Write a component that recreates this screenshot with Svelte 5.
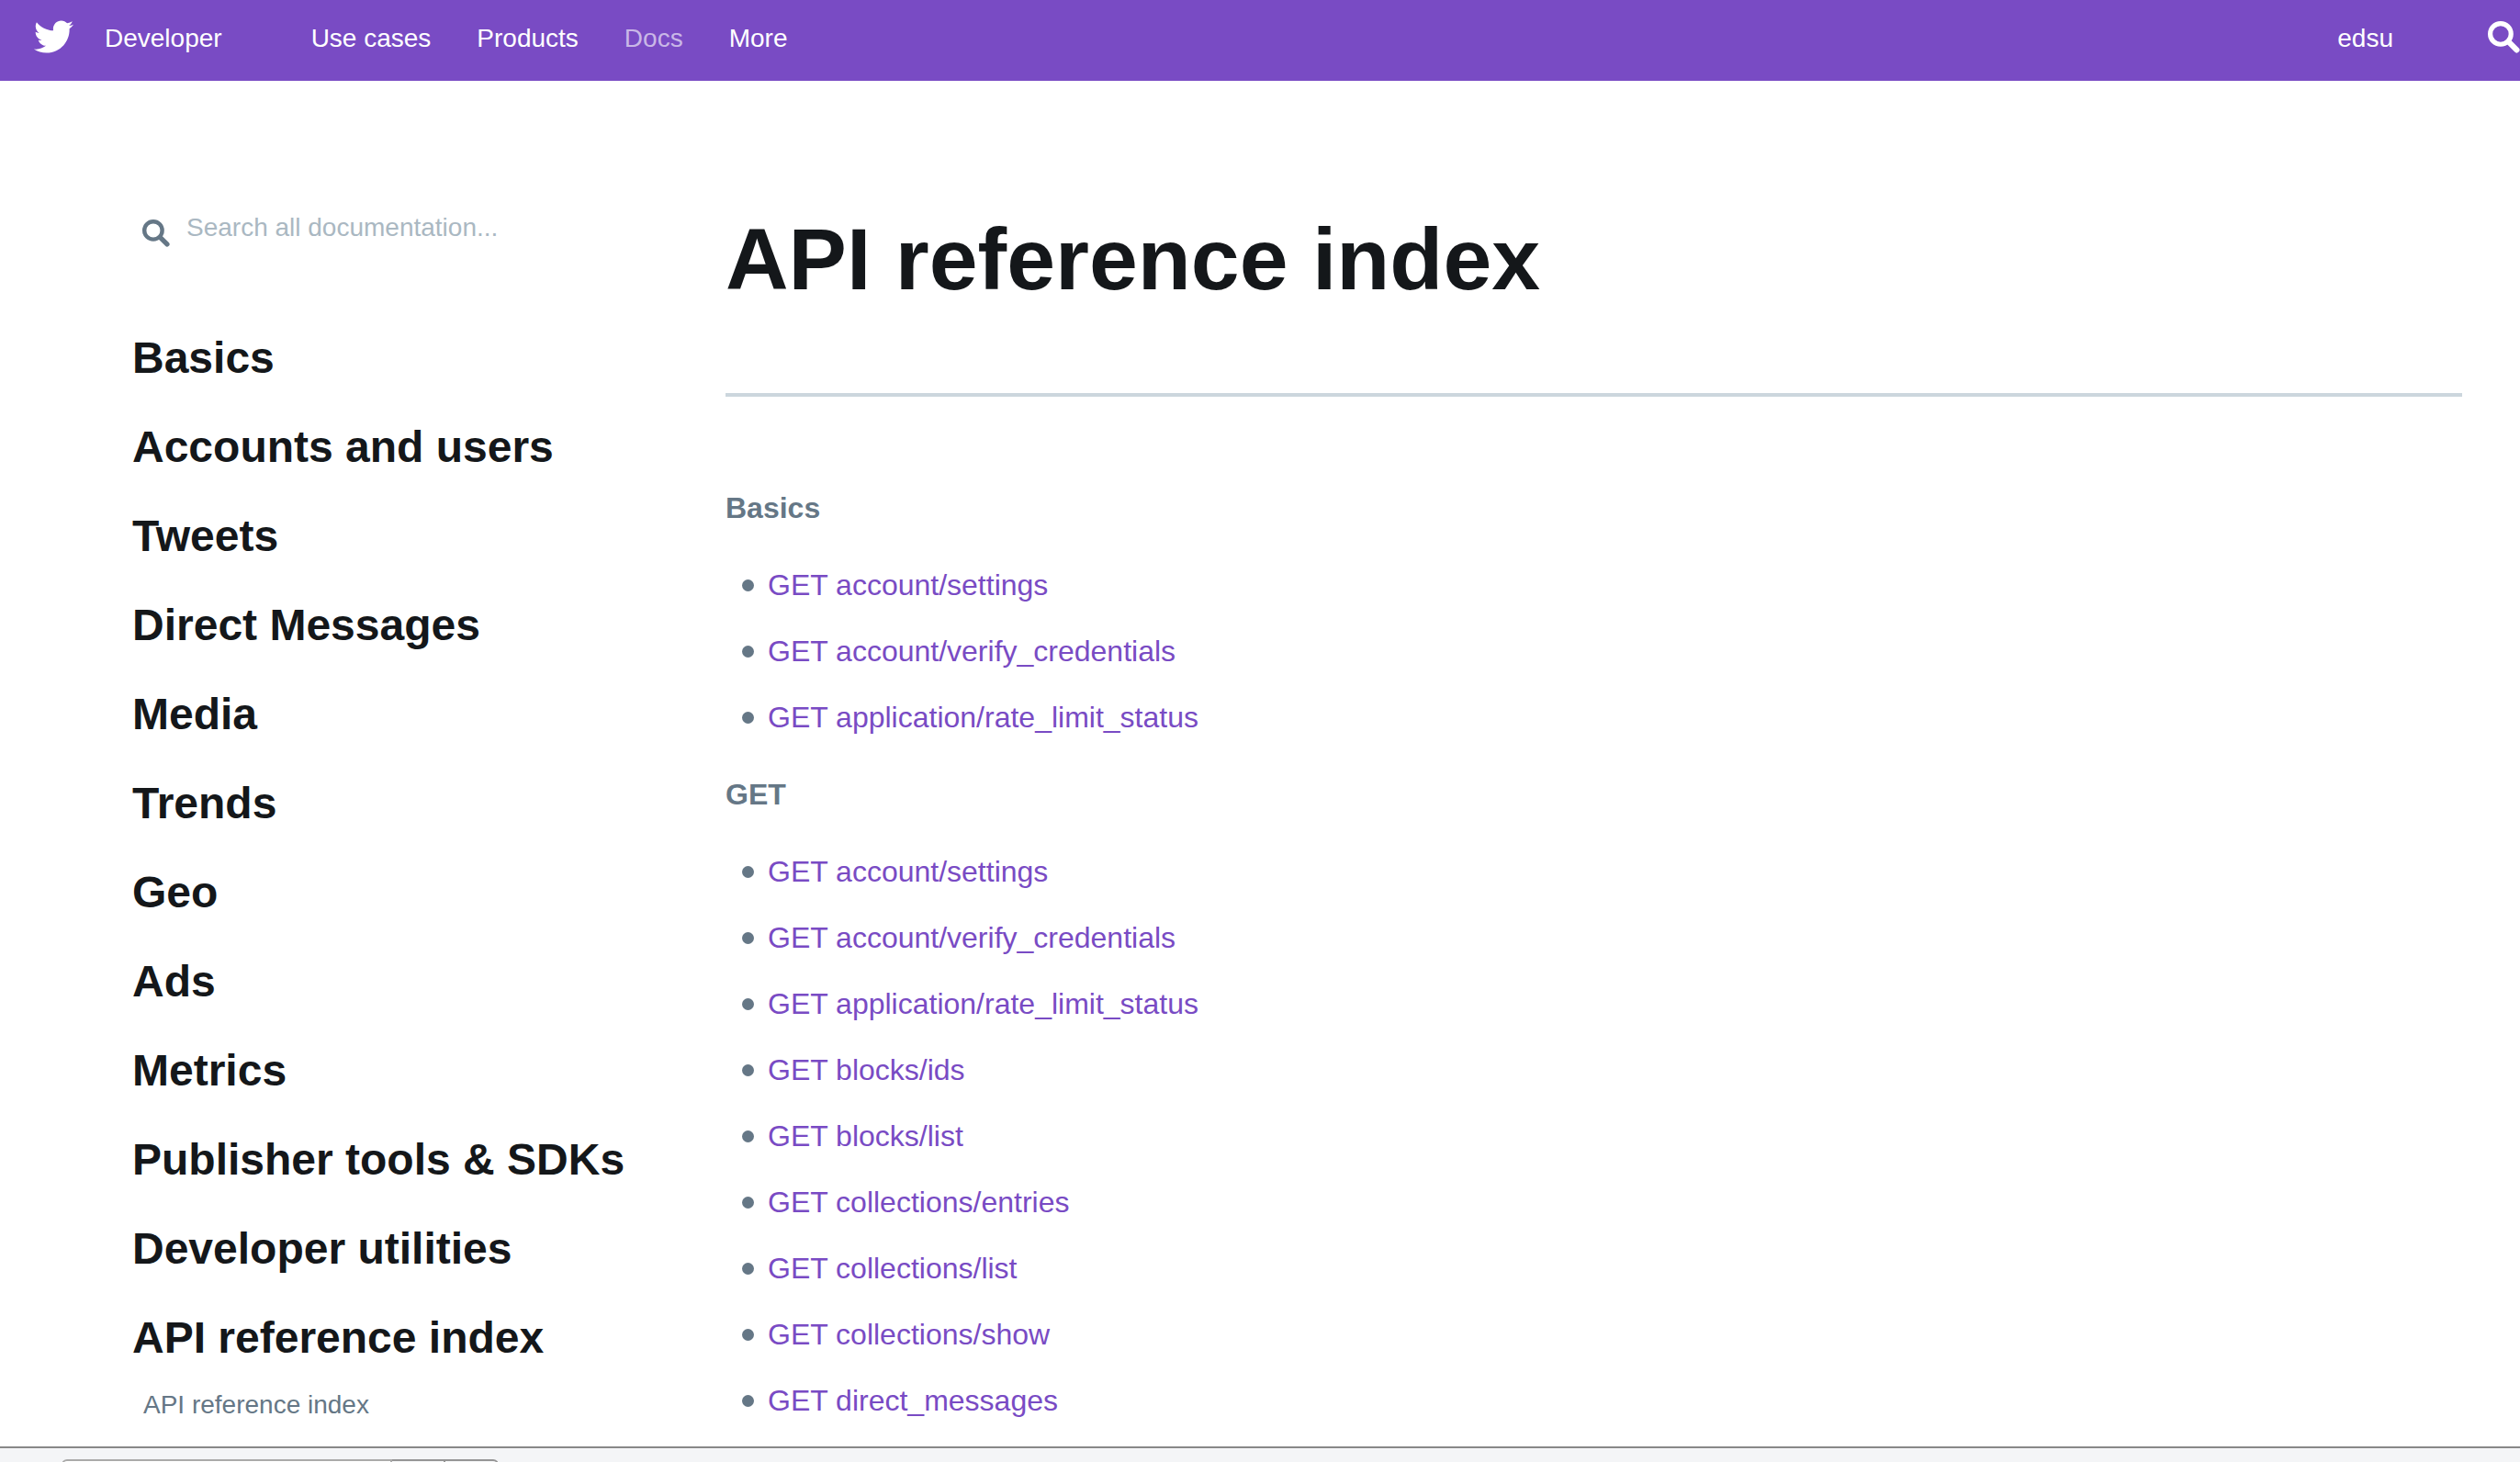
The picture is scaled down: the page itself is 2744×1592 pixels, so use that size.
<script>
  const navLinks = [
    { label: 'Use cases' },
    { label: 'Products' },
    { label: 'Docs', current: true },
    { label: 'More' }
  ];

  const topics = [
    'Basics',
    'Accounts and users',
    'Tweets',
    'Direct Messages',
    'Media',
    'Trends',
    'Geo',
    'Ads',
    'Metrics',
    'Publisher tools & SDKs',
    'Developer utilities',
    'API reference index'
  ];

  const sections = [
    {
      title: 'Basics',
      endpoints: [
        'GET account/settings',
        'GET account/verify_credentials',
        'GET application/rate_limit_status'
      ]
    },
    {
      title: 'GET',
      endpoints: [
        'GET account/settings',
        'GET account/verify_credentials',
        'GET application/rate_limit_status',
        'GET blocks/ids',
        'GET blocks/list',
        'GET collections/entries',
        'GET collections/list',
        'GET collections/show',
        'GET direct_messages'
      ]
    }
  ];
</script>

{#snippet magnifier()}
  <svg viewBox="0 0 34 34" aria-hidden="true">
    <circle cx="13.5" cy="13.5" r="11" fill="none" stroke="currentColor" stroke-width="5" />
    <path d="M23 23 L30.5 30.5" fill="none" stroke="currentColor" stroke-width="6" stroke-linecap="round" />
  </svg>
{/snippet}

<div class="window">
  <header class="topbar">
    <a class="brand" href="#home">
      <svg class="bird" viewBox="0 0 24 20" aria-hidden="true">
        <path
          d="M23.954 2.569c-.885.389-1.83.654-2.825.775 1.014-.611 1.794-1.574 2.163-2.723-.951.555-2.005.959-3.127 1.184-.896-.959-2.173-1.559-3.591-1.559-2.717 0-4.92 2.203-4.92 4.917 0 .39.045.765.127 1.124C7.691 6.094 4.066 4.13 1.64 1.161c-.427.722-.666 1.561-.666 2.475 0 1.71.87 3.213 2.188 4.096-.807-.026-1.566-.248-2.228-.616v.061c0 2.385 1.693 4.374 3.946 4.827-.413.111-.849.171-1.296.171-.314 0-.615-.03-.916-.086.631 1.953 2.445 3.377 4.604 3.417-1.68 1.319-3.809 2.105-6.102 2.105-.39 0-.779-.023-1.17-.067 2.189 1.394 4.768 2.209 7.557 2.209 9.054 0 13.999-7.496 13.999-13.986 0-.209 0-.42-.015-.63.961-.689 1.8-1.56 2.46-2.548l-.047-.02z"
          fill="currentColor"
        />
      </svg>
      Developer
    </a>
    <nav class="primary" aria-label="Primary">
      {#each navLinks as link}
        <a href="#nav" class:current={link.current}>{link.label}</a>
      {/each}
    </nav>
    <a class="user" href="#account">edsu</a>
    <button class="search-button" type="button" aria-label="Search">
      {@render magnifier()}
    </button>
  </header>

  <div class="page">
    <aside class="sidebar">
      <label class="doc-search">
        {@render magnifier()}
        <input type="text" placeholder="Search all documentation..." aria-label="Search all documentation" />
      </label>
      <nav aria-label="Documentation">
        <ul class="topics">
          {#each topics as topic}
            <li><a href="#topic">{topic}</a></li>
          {/each}
        </ul>
        <a class="subtopic" href="#index">API reference index</a>
      </nav>
    </aside>

    <main>
      <h1>API reference index</h1>
      <hr />
      {#each sections as section}
        <section>
          <h2>{section.title}</h2>
          <ul class="endpoints">
            {#each section.endpoints as endpoint}
              <li><a href="#endpoint">{endpoint}</a></li>
            {/each}
          </ul>
        </section>
      {/each}
    </main>
  </div>

  <div class="findbar">
    <input type="text" aria-label="Find in page" />
    <button type="button" aria-label="Previous match"></button>
    <button type="button" aria-label="Next match"></button>
  </div>
</div>

<style>
  .window {
    display: flex;
    flex-direction: column;
    height: 100vh;
    overflow: hidden;
    background: #fff;
    color: #14171a;
    font-family: 'Liberation Sans', Arial, sans-serif;
    font-size: 28px;
  }

  .window * {
    box-sizing: border-box;
  }

  a {
    color: inherit;
    text-decoration: none;
  }

  ul {
    margin: 0;
    padding: 0;
    list-style: none;
  }

  .topbar {
    display: flex;
    flex: none;
    align-items: center;
    height: 88px;
    padding: 0 0 4px 37px;
    background: #794bc4;
    color: #fff;
    line-height: 84px;
  }

  .brand {
    display: flex;
    align-items: center;
    gap: 34px;
  }

  .bird {
    width: 43px;
    height: 36px;
    margin-bottom: 4px;
  }

  .primary {
    display: flex;
    gap: 50px;
    margin-left: 97px;
  }

  .primary .current {
    color: #c9b7e7;
  }

  .user {
    margin-left: auto;
  }

  .search-button {
    display: flex;
    margin: 0 0 4px 103px;
    padding: 0;
    border: 0;
    background: none;
    color: inherit;
  }

  .search-button svg {
    width: 35px;
    height: 35px;
  }

  .page {
    display: flex;
    flex: 1;
    min-height: 0;
    overflow: hidden;
    padding: 134px 63px 0 144px;
  }

  .sidebar {
    flex: 0 0 646px;
    padding-top: 6px;
  }

  .doc-search {
    display: flex;
    align-items: center;
    gap: 18px;
    height: 40px;
    margin-bottom: 73px;
    padding-left: 11px;
    color: #657786;
  }

  .doc-search svg {
    flex: none;
    width: 30px;
    height: 30px;
    margin-top: 12px;
  }

  .doc-search input {
    flex: 1;
    min-width: 0;
    height: 40px;
    padding: 0;
    border: 0;
    outline: 0;
    background: none;
    color: inherit;
    font: inherit;
  }

  .doc-search input::placeholder {
    color: #aab8c2;
    opacity: 1;
  }

  .topics {
    font-size: 48px;
    font-weight: 700;
    line-height: 97px;
  }

  .subtopic {
    display: block;
    padding: 5px 0 0 12px;
    color: #657786;
    line-height: 40px;
  }

  main {
    flex: 1;
    min-width: 0;
  }

  h1 {
    margin: 0;
    font-size: 95px;
    line-height: 120px;
  }

  hr {
    height: 4px;
    margin: 86px 0 85px;
    border: 0;
    background: #ccd6dd;
  }

  section {
    margin-bottom: 12px;
    font-size: 32px;
    line-height: 72px;
  }

  h2 {
    margin: 0 0 12px;
    color: #657786;
    font-size: 32px;
  }

  .endpoints li {
    display: flex;
    align-items: center;
    gap: 15px;
    padding-left: 18px;
    color: #794bc4;
  }

  .endpoints li::before {
    width: 13px;
    height: 13px;
    border-radius: 50%;
    background: #657786;
    content: '';
  }

  .findbar {
    display: flex;
    flex: none;
    align-items: flex-start;
    height: 17px;
    overflow: hidden;
    padding: 12px 0 0 67px;
    border-top: 2px solid #888;
    background: #f4f5f7;
  }

  .findbar input,
  .findbar button {
    flex: none;
    height: 44px;
    margin: 0;
    padding: 0;
    border: 2px solid #aaa;
    border-radius: 0;
    background: #fff;
  }

  .findbar input {
    width: 360px;
    border-radius: 6px 0 0 6px;
  }

  .findbar button {
    width: 58px;
    border-color: #959595;
    border-left: 0;
    background: #f4f5f7;
  }

  .findbar button:last-child {
    border-radius: 0 6px 6px 0;
  }
</style>
